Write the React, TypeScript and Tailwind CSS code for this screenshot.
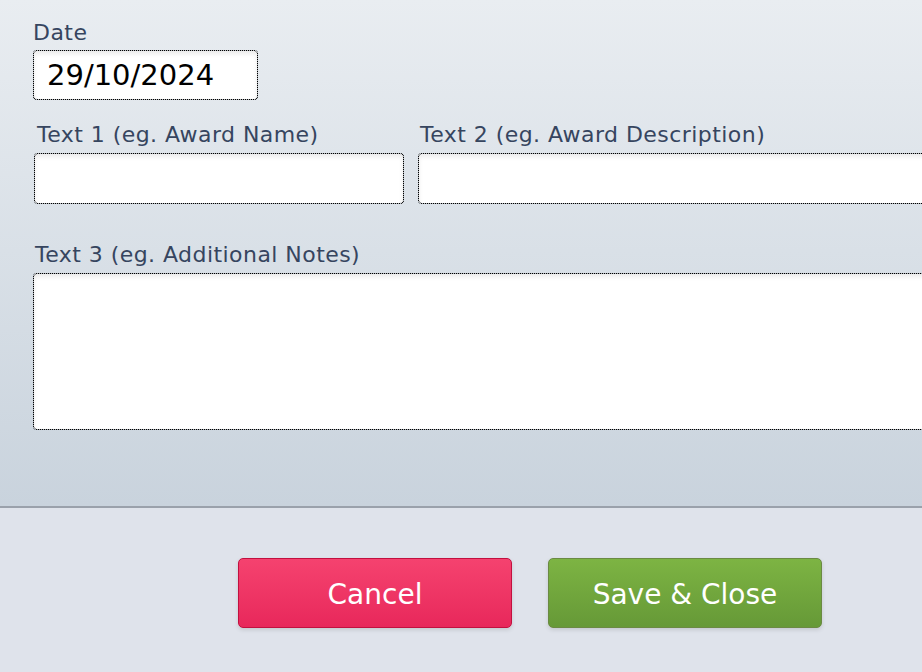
import React from "react";

const font = { fontFamily: '"DejaVu Sans", Verdana, sans-serif' };

function Field({ className = "", children }: { className?: string; children?: React.ReactNode }) {
  return (
    <div
      className={`p-[1px] rounded-[4px] bg-[image:repeating-conic-gradient(#000_0_25%,rgba(0,0,0,0.22)_0_50%)] bg-[length:2px_2px] ${className}`}
    >
      <div className="w-full h-full bg-white rounded-[3px] shadow-[inset_0_3px_4px_rgba(0,0,0,0.08)] flex items-center">
        {children}
      </div>
    </div>
  );
}

const label = "text-[22px] leading-[26px] text-[#36455f] tracking-[0.45px]";

export default function App() {
  return (
    <div className="w-[922px] h-[672px] overflow-hidden flex flex-col" style={font}>
      <div className="h-[506px] shrink-0 bg-gradient-to-b from-[#e9edf1] to-[#c9d3dd] pl-[33px] pt-[20px] flex flex-col">
        <div className={label}>Date</div>
        <Field className="mt-[4px] w-[225px] h-[50px]">
          <span className="pl-[13px] text-[29px] leading-none text-black">29/10/2024</span>
        </Field>
        <div className="flex mt-[22px] gap-[14px] ml-[1px]">
          <div className="flex flex-col w-[370px] shrink-0">
            <div className={`${label} ml-[3px]`}>Text 1 (eg. Award Name)</div>
            <Field className="mt-[5px] h-[51px]" />
          </div>
          <div className="flex flex-col w-[520px] shrink-0">
            <div className={`${label} ml-[2px]`}>Text 2 (eg. Award Description)</div>
            <Field className="mt-[5px] h-[51px]" />
          </div>
        </div>
        <div className={`${label} mt-[38px] ml-[2px]`}>Text 3 (eg. Additional Notes)</div>
        <Field className="mt-[5px] w-[920px] h-[157px] shrink-0" />
      </div>
      <div className="h-[2px] bg-[#9aa1ab] shrink-0" />
      <div className="flex-1 bg-[#dfe3eb] pl-[238px] pt-[50px] flex gap-[36px] items-start">
        <button className="w-[274px] h-[70px] pt-[4px] rounded-[5px] border border-[#c2103f] bg-gradient-to-b from-[#f5426f] to-[#e8275b] text-white text-[28px] shadow-[0_2px_4px_rgba(0,0,0,0.12)]">
          Cancel
        </button>
        <button className="w-[274px] h-[70px] pt-[4px] rounded-[5px] border border-[#6b8a43] bg-gradient-to-b from-[#7db443] to-[#669937] text-white text-[28px] shadow-[0_2px_4px_rgba(0,0,0,0.12)]">
          Save &amp; Close
        </button>
      </div>
    </div>
  );
}
